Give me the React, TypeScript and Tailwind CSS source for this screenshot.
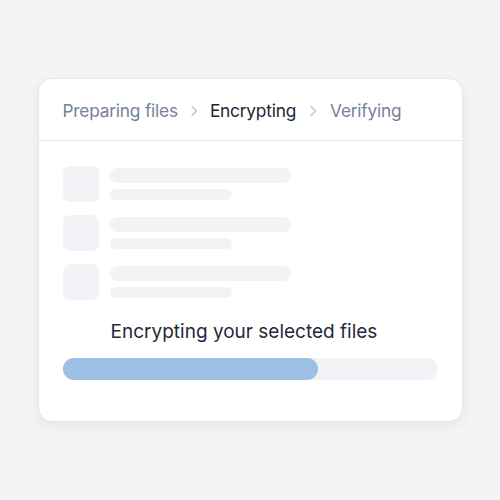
export default function App() {
  const rows = [0, 1, 2];
  return (
    <div className="w-[500px] h-[500px] bg-[#f3f4f6] flex justify-center pt-[78px]" style={{ fontFamily: 'Inter, "Noto Sans", sans-serif' }}>
      <div className="w-[425px] h-[344px] bg-white rounded-[14px] border border-[#e2e7ee] shadow-[0_4px_14px_rgba(15,23,42,0.06)] flex flex-col">
        <div className="h-[62px] border-b border-[#e3e8ef] flex items-center pl-[24px] pt-[3px] text-[17.3px] tracking-[-0.2px]">
          <span className="text-[#748298]">Preparing files</span>
          <svg className="mx-[9px]" width="14" height="14" viewBox="0 0 14 14" fill="none" stroke="#b8c0cc" strokeWidth="1.3" strokeLinecap="round" strokeLinejoin="round"><path d="M5 2.5 L9.5 7 L5 11.5" /></svg>
          <span className="text-[#1c2536]">Encrypting</span>
          <svg className="mx-[10px]" width="14" height="14" viewBox="0 0 14 14" fill="none" stroke="#b8c0cc" strokeWidth="1.3" strokeLinecap="round" strokeLinejoin="round"><path d="M5 2.5 L9.5 7 L5 11.5" /></svg>
          <span className="text-[#748298]">Verifying</span>
        </div>
        <div className="flex flex-col px-[24px] pt-[25px] gap-[13px]">
          {rows.map((r) => (
            <div key={r} className="flex items-start gap-[11px]">
              <div className="w-[36px] h-[36px] rounded-[7px] bg-[#f1f3f6]" />
              <div className="flex flex-col gap-[6px] pt-[2px]">
                <div className="w-[181px] h-[15px] rounded-full bg-[#f1f3f6]" />
                <div className="w-[122px] h-[11px] rounded-full bg-[#f1f3f6]" />
              </div>
            </div>
          ))}
        </div>
        <div className="text-center text-[19px] text-[#1f2a3c] mt-[18px] pr-[12px]">Encrypting your selected files</div>
        <div className="mx-[24px] mt-[11px] h-[22px] rounded-full bg-[#f1f3f6]">
          <div className="h-full rounded-full bg-[#9cbfe4]" style={{ width: '68%' }} />
        </div>
      </div>
    </div>
  );
}
